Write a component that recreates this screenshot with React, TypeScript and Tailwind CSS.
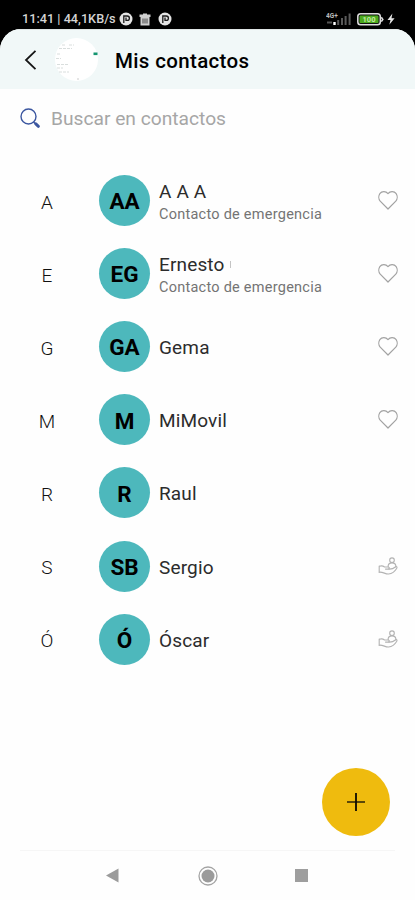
type Contact = { letter: string; initials: string; name: string; note?: string; icon?: "heart" | "care"; cut?: boolean };

const contacts: Contact[] = [
  { letter: "A", initials: "AA", name: "A A A", note: "Contacto de emergencia", icon: "heart" },
  { letter: "E", initials: "EG", name: "Ernesto", note: "Contacto de emergencia", icon: "heart", cut: true },
  { letter: "G", initials: "GA", name: "Gema", icon: "heart" },
  { letter: "M", initials: "M", name: "MiMovil", icon: "heart" },
  { letter: "R", initials: "R", name: "Raul" },
  { letter: "S", initials: "SB", name: "Sergio", icon: "care" },
  { letter: "Ó", initials: "Ó", name: "Óscar", icon: "care" },
];

function PBadge() {
  return (
    <svg width="14" height="14" viewBox="0 0 14 14" fill="none">
      <circle cx="7" cy="7" r="6.500" fill="#e4e4e4" />
      <path d="M4.800 11V4h3.400a2.200 2.200 0 0 1 0 4.400H7V5.500" stroke="#1a1a1a" strokeWidth="1.300" />
    </svg>
  );
}

function StatusBar() {
  return (
    <div className="flex h-[29px] items-center pl-[22px] pr-[20px] pt-[9px]">
      <span className="w-[97px] whitespace-nowrap text-[12.7px] font-medium leading-none text-[#d4d4d4]">11:41 | 44,1KB/s</span>
      <PBadge />
      <svg className="ml-[6px]" width="12" height="13" viewBox="0 0 12 13" fill="#d0d0d0">
        <path d="M.5 1.500h3.500V.5h4v1h3.500V4H.5zM1.500 4h9v8.500h-9z" />
        <path d="M4 5.500v5M6 5.500v5M8 5.500v5" stroke="#222" strokeWidth=".8" />
      </svg>
      <span className="ml-[7px]"><PBadge /></span>
      <div className="ml-auto flex items-center">
        <svg width="26" height="14" viewBox="0 0 26 14">
          <text x="0" y="6" fontSize="6.500" fontWeight="700" fill="#bbb">4G+</text>
          <path d="M1 10.500h5" stroke="#555" strokeWidth="2" />
          <path d="M8.500 10v3" stroke="#fff" strokeWidth="2.400" />
          <path d="M12.200 8v5M16 6v7M19.600 4v9M23.600 1.500v11.500" stroke="#595959" strokeWidth="2" />
        </svg>
        <svg className="ml-[5px]" width="27" height="13" viewBox="0 0 27 13">
          <rect x=".8" y=".8" width="22.500" height="11" rx="2.800" fill="#111" stroke="#dedede" strokeWidth="1.500" />
          <path d="M24.300 4.200l1.500 2.200-1.500 2.200" stroke="#dedede" strokeWidth="1.600" fill="none" />
          <rect x="2.500" y="2.500" width="19" height="7.600" rx="1.200" fill="#4aa91c" />
          <text x="12" y="9.200" textAnchor="middle" fontSize="7.500" fontWeight="700" fill="#c4eaa2">100</text>
        </svg>
        <svg className="ml-[3px]" width="8" height="12" viewBox="0 0 8 12" fill="#e4e4e4">
          <path d="M5.400.5L.5 7h3L2.300 11.700 7.600 5.200H4.500z" />
        </svg>
      </div>
    </div>
  );
}

function Heart() {
  return (
    <svg width="20" height="19" viewBox="0 0 20 19" fill="none" stroke="#a2a2a2" strokeWidth="1.200" strokeLinejoin="round">
      <path d="M10 18L2.200 10.200C.5 8.300.4 4.900 1.800 2.700 3.800.1 7.700-.1 10 2.600c2.300-2.700 6.200-2.500 8.200.1 1.400 2.200 1.300 5.600-.4 7.500z" />
    </svg>
  );
}

// Open hand holding a small person
function Care() {
  return (
    <svg width="20" height="19" viewBox="0 0 20 19" fill="none" stroke="#b2b2b2" strokeWidth="1.100" strokeLinejoin="round" strokeLinecap="round">
      <circle cx="14" cy="3.200" r="2.300" />
      <path d="M10.200 9.500V8.400c.3-1.700 1.500-2.500 3.800-2.500s3.500.8 3.800 2.500v1.200" />
      <path d="M1.200 9v6.300M1.200 9.300c2-.8 3.800-.6 5.300.7h3.700c1.500 0 1.600 2 0 2.100H7.500" />
      <path d="M10.800 12.100c3 .2 5.200-1 7-2.400 1.200-.3 1.500.8 1 1.500-1.800 3-4.600 5.400-8.300 5.800-3.300.2-5.300-2.200-9.300-1.800" />
    </svg>
  );
}

export default function App() {
  return (
    <div className="flex h-[900px] w-[415px] flex-col overflow-hidden bg-black font-['Roboto',sans-serif] text-black">
      <StatusBar />

      <div className="flex flex-1 flex-col overflow-hidden rounded-t-[21px] bg-[#fefefe]">
        <header className="flex h-[60px] items-center border-t border-[#dfe5e5] bg-[#f1f8f8] pl-[24px]">
          <svg width="13" height="20" viewBox="0 0 13 20" fill="none" stroke="#161616" strokeWidth="1.800">
            <path d="M11.500.8L2 10l9.500 9.200" />
          </svg>
          <div className="ml-[18px] h-[43px] w-[43px]">
            <svg width="43" height="43" viewBox="0 0 43 43">
              <circle cx="21.500" cy="21.500" r="21.500" fill="#fff" />
              <path d="M7 7h4M14 7h5M4 10.500h13M2 16h4M1 20.500h5M2 26.500h11M2 30h6M4 34h10" stroke="#d9dedd" strokeWidth="1" strokeDasharray="3 1" />
              <rect x="38.500" y="14.500" width="4" height="2.600" fill="#159570" />
              <path d="M22 41h2" stroke="#ccc" />
            </svg>
          </div>
          <h1 className="ml-[17px] pt-[3px] text-[20.5px] font-medium leading-none tracking-[0.35px]">Mis contactos</h1>
        </header>

        <div className="flex h-[58px] items-center pl-[20px]">
          <svg width="21" height="21" viewBox="0 0 21 21" fill="none" stroke="#3c57a0">
            <circle cx="8.500" cy="8.500" r="7.500" strokeWidth="1.400" />
            <path d="M13.500 14l1.800 1.600" strokeWidth="1.500" />
            <path d="M15.800 15.900l2.600 2.400" strokeWidth="3" strokeLinecap="round" />
          </svg>
          <span className="ml-[10px] pt-[2px] text-[19.2px] leading-none text-[#a6a6a6]">Buscar en contactos</span>
        </div>

        <ul className="pt-[17px]">
          {contacts.map((c) => (
            <li key={c.letter} className="flex h-[73.1px] items-center pr-[17px]">
              <span className="ml-[32px] w-[30px] pt-[3px] text-center text-[19px] font-light leading-none text-[#111]">{c.letter}</span>
              <div className="ml-[37px] flex h-[51px] w-[51px] items-center justify-center rounded-full bg-[#4db8bc] pt-[2px] text-[22.5px] font-bold leading-none">
                {c.initials}
              </div>
              <div className="ml-[9px] flex flex-1 flex-col pt-[3px]">
                <div className="flex items-center">
                  <span className="text-[19px] leading-[22px] tracking-[0.15px] text-[#2c2c2c]">{c.name}</span>
                  {c.cut && <span className="ml-[5px] h-[7px] w-px bg-[#c4c4c4]" />}
                </div>
                {c.note && <span className="mt-[3px] text-[14.5px] leading-[18px] tracking-[0.25px] text-[#747474]">{c.note}</span>}
              </div>
              {c.icon === "heart" && <Heart />}
              {c.icon === "care" && <Care />}
            </li>
          ))}
        </ul>

        <div className="mt-auto flex justify-end pr-[25px]">
          <button className="flex h-[68px] w-[68px] items-center justify-center rounded-full bg-[#efbb0e]">
            <svg width="18" height="18" viewBox="0 0 18 18">
              <path d="M0 9h18" stroke="#4a3b08" strokeWidth="1.800" />
              <path d="M9 0v18" stroke="#0c0a02" strokeWidth="1.800" />
            </svg>
          </button>
        </div>

        <nav className="mx-[20px] mt-[14px] flex h-[50px] items-center border-t border-[#f6f6f6] pl-[86px]">
          <svg width="13" height="15" viewBox="0 0 13 15"><path d="M0 7.500L12.500.5v14z" fill="#9b9b9b" /></svg>
          <svg className="ml-[79px]" width="20" height="20" viewBox="0 0 20 20">
            <circle cx="10" cy="10" r="9" fill="none" stroke="#a4a4a4" strokeWidth="1.300" />
            <circle cx="10" cy="10" r="6.500" fill="#9b9b9b" />
          </svg>
          <div className="ml-[77px] h-[13px] w-[13px] bg-[#9e9e9e]" />
        </nav>
      </div>
    </div>
  );
}
